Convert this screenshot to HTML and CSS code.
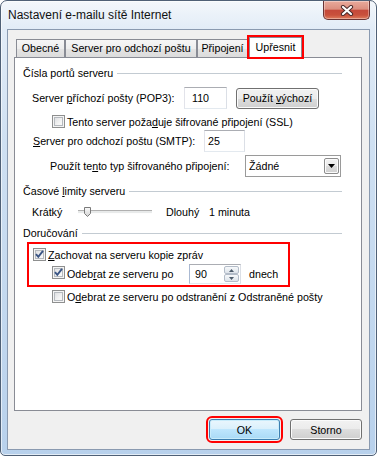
FILE: index.html
```html
<!DOCTYPE html>
<html lang="cs">
<head>
  <meta charset="UTF-8">
  <title>Nastavení e-mailu sítě Internet</title>
  <link rel="stylesheet" href="styles.css">
</head>
<body>
  <div class="window">
    <div class="titlebar">
      <span class="title">Nastavení e-mailu sítě Internet</span>
      <div class="close">
        <svg width="14" height="11" viewBox="0 0 14 11">
          <path d="M3 2 L11 9 M11 2 L3 9" stroke="#4a2a2a" stroke-width="4.2" stroke-linecap="round"/>
          <path d="M3 2 L11 9 M11 2 L3 9" stroke="#fff" stroke-width="2.2" stroke-linecap="round"/>
        </svg>
      </div>
    </div>

    <div class="client">
      <div class="tabs">
        <div class="tab tab-general">Obecné</div>
        <div class="tab tab-outgoing">Server pro odchozí poštu</div>
        <div class="tab tab-connection">Připojení</div>
        <div class="tab tab-advanced">Upřesnit</div>
      </div>

      <div class="panel">
        <div class="group-head head-ports"><span>Čísla portů serveru</span></div>

        <div class="row row-pop3">
          <span class="lbl lbl-pop3">Server <u>p</u>říchozí pošty (POP3):</span>
          <span class="field field-pop3">110</span>
          <span class="btn btn-reset"><span>Použít <u>v</u>ýchozí</span></span>
        </div>

        <div class="row row-ssl">
          <span class="check"></span>
          <span>Tento server poža<u>d</u>uje šifrované připojení (SSL)</span>
        </div>

        <div class="row row-smtp">
          <span class="lbl lbl-smtp"><u>S</u>erver pro odchozí poštu (SMTP):</span>
          <span class="field field-smtp">25</span>
        </div>

        <div class="row row-enc">
          <span class="lbl lbl-enc">Použít te<u>n</u>to typ šifrovaného připojení:</span>
          <span class="combo">
            <span class="combo-text">Žádné</span>
            <span class="combo-arrow">
              <svg width="7" height="4" viewBox="0 0 7 4"><path d="M0 0 H7 L3.5 4 Z" fill="#000"/></svg>
            </span>
          </span>
        </div>

        <div class="group-head head-timeouts"><span>Časové <u>l</u>imity serveru</span></div>

        <div class="row row-slider">
          <span class="lbl lbl-short">Krátký</span>
          <span class="slider">
            <svg class="thumb" width="7" height="10" viewBox="0 0 7 10">
              <defs>
                <linearGradient id="tg" x1="0" y1="0" x2="0" y2="1">
                  <stop offset="0" stop-color="#fafafa"/>
                  <stop offset="1" stop-color="#d2d2d2"/>
                </linearGradient>
              </defs>
              <path d="M0.5 0.5 H6.5 V6.5 L3.5 9.5 L0.5 6.5 Z" fill="url(#tg)" stroke="#7a7a7a"/>
            </svg>
          </span>
          <span class="lbl lbl-long">Dlouhý</span>
          <span>1 minuta</span>
        </div>

        <div class="group-head head-delivery"><span>Doručování</span></div>

        <div class="keep">
          <div class="row row-keep">
            <span class="check checked">
              <svg width="11" height="11" viewBox="0 0 11 11"><path d="M2 5.2 L4.3 7.8 L9 1.8" fill="none" stroke="#3a5585" stroke-width="1.9"/></svg>
            </span>
            <span><u>Z</u>achovat na serveru kopie zpráv</span>
          </div>
          <div class="row row-remove">
            <span class="check checked">
              <svg width="11" height="11" viewBox="0 0 11 11"><path d="M2 5.2 L4.3 7.8 L9 1.8" fill="none" stroke="#3a5585" stroke-width="1.9"/></svg>
            </span>
            <span class="lbl lbl-remove">Odeb<u>r</u>at ze serveru po</span>
            <span class="spin">
              <span class="spin-val">90</span>
              <span class="spin-btns">
                <span class="spin-btn"><svg width="5" height="3" viewBox="0 0 5 3"><path d="M0 3 H5 L2.5 0 Z" fill="#4c5a6a"/></svg></span>
                <span class="spin-btn"><svg width="5" height="3" viewBox="0 0 5 3"><path d="M0 0 H5 L2.5 3 Z" fill="#4c5a6a"/></svg></span>
              </span>
            </span>
            <span class="days">dnech</span>
          </div>
        </div>

        <div class="row row-after">
          <span class="check"></span>
          <span>O<u>d</u>ebrat ze serveru po odstranění z Odstraněné pošty</span>
        </div>
      </div>

      <div class="actions">
        <span class="btn btn-ok">OK</span>
        <span class="btn btn-cancel">Storno</span>
      </div>
    </div>
  </div>
</body>
</html>
```

FILE: styles.css
```css
* {
  box-sizing: border-box;
}
body {
  margin: 0;
  background: #fff;
  font-family: "Liberation Sans", Arial, sans-serif;
  font-size: 10.7px;
  color: #000;
}
u {
  text-decoration: underline;
  text-underline-offset: 1px;
}

/* window frame */
.window {
  width: 377px;
  height: 456px;
  border: 1px solid #4f6076;
  border-radius: 7px 7px 5px 5px;
  background: linear-gradient(to bottom, #f3f7fb 0, #e2ecf7 28px, #cfe0f2 140px, #b8d1ec 100%);
  box-shadow: inset 0 0 0 1px rgba(255, 255, 255, 0.6);
  padding: 0 6px 5px;
  display: flex;
  flex-direction: column;
}
.titlebar {
  height: 28px;
  display: flex;
  align-items: flex-start;
}
.title {
  font-size: 12px;
  line-height: 16px;
  margin: 6px 0 0 1px;
  color: #111;
}
.close {
  margin-left: auto;
  width: 47px;
  height: 19px;
  border: 1px solid #6a3434;
  border-top: 0;
  border-radius: 0 0 5px 5px;
  background: linear-gradient(to bottom, #e9aa9c 0, #dc8f7f 45%, #c5493a 52%, #c9513c 78%, #df7d5e 100%);
  box-shadow: inset 0 0 0 1px rgba(255, 255, 255, 0.35);
  display: flex;
  align-items: center;
  justify-content: center;
}
.client {
  flex: 1;
  border: 1px solid #8a9ab0;
  background: #f0f0f0;
  display: flex;
  flex-direction: column;
}

/* tabs */
.tabs {
  display: flex;
  align-items: flex-end;
  height: 20px;
  margin-top: 7px;
  padding-left: 8px;
}
.tab {
  height: 18px;
  border: 1px solid #898c95;
  border-bottom: 0;
  background: linear-gradient(to bottom, #f6f6f6 0, #eeeeee 50%, #e4e4e4 50%, #dcdcdc 100%);
  text-align: center;
  line-height: 17px;
}
.tab-general { width: 49px; }
.tab-outgoing { width: 132px; }
.tab-connection { width: 51px; }
.tab-advanced {
  position: relative;
  z-index: 1;
  width: 53px;
  height: 20px;
  margin-left: 1px;
  background: #fff;
  line-height: 18px;
  outline: 2px solid #f00;
}

/* page */
.panel {
  margin: 0 7px 0 6px;
  height: 354px;
  border: 1px solid #898c95;
  background: #fff;
}
.group-head {
  display: flex;
  align-items: center;
  height: 16px;
  padding-left: 8px;
  margin-right: 19px;
  white-space: nowrap;
}
.group-head::after {
  content: "";
  flex: 1;
  border-top: 1px solid #c3cbd2;
  margin-left: 4px;
}
.head-ports { margin-top: 7px; }
.head-timeouts { margin-top: 6px; }
.head-delivery { margin-top: 5px; }

.row {
  display: flex;
  align-items: center;
  white-space: nowrap;
}
.row-pop3 { margin-top: 6px; height: 22px; padding-left: 17px; }
.row-ssl { margin-top: 6px; height: 13px; padding-left: 37px; }
.row-smtp { margin-top: 2px; height: 22px; padding-left: 18px; }
.row-enc { margin-top: 3px; height: 22px; padding-left: 35px; }
.row-slider { margin-top: 5px; height: 16px; padding-left: 17px; }
.row-after { margin-top: 3px; height: 13px; padding-left: 37px; }

.lbl-pop3 { width: 152px; }
.lbl-smtp { width: 171px; }
.lbl-enc { width: 195px; }
.lbl-short { width: 46px; }
.lbl-long { width: 43px; margin-left: 14px; }
.lbl-remove { width: 122px; }

/* controls */
.field {
  height: 22px;
  border: 1px solid;
  border-color: #abadb3 #dbdfe6 #e3e9ef #e2e3ea;
  background: #fff;
  display: flex;
  align-items: center;
}
.field-pop3 { width: 43px; padding-left: 7px; }
.field-smtp { width: 41px; padding-left: 3px; }

.btn {
  height: 21px;
  border: 1px solid #707070;
  border-radius: 3px;
  background: linear-gradient(to bottom, #f2f2f2 0, #ebebeb 50%, #dddddd 50%, #cfcfcf 100%);
  box-shadow: inset 0 0 0 1px #fbfbfb;
  display: flex;
  align-items: center;
  justify-content: center;
  white-space: nowrap;
}
.btn-reset { width: 83px; margin-left: 9px; }

.combo {
  width: 96px;
  height: 22px;
  border: 1px solid #9a9a9a;
  background: #fff;
  display: flex;
  align-items: center;
  padding: 0 1px 0 3px;
}
.combo-text { flex: 1; }
.combo-arrow {
  width: 15px;
  height: 16px;
  border: 1px solid #8c8c8c;
  border-radius: 2px;
  background: linear-gradient(to bottom, #f2f2f2 0, #ebebeb 50%, #dddddd 50%, #cfcfcf 100%);
  box-shadow: inset 0 0 0 1px #fbfbfb;
  display: flex;
  align-items: center;
  justify-content: center;
}

.check {
  width: 13px;
  height: 13px;
  flex: none;
  margin-right: 2px;
  border: 1px solid #8e8f8f;
  background: linear-gradient(135deg, #d6d8db 0, #f4f4f4 60%, #fdfdfd 100%);
  box-shadow: inset 0 0 0 1px #f4f4f4, inset 0 0 0 2px #b5b9be;
  display: flex;
  align-items: center;
  justify-content: center;
}

.slider {
  width: 74px;
  height: 16px;
  display: flex;
  align-items: center;
  background: linear-gradient(to bottom, transparent 6px, #b0b0b0 6px, #b0b0b0 7px, #e8eaea 7px, #e8eaea 9px, #fdfdfd 9px, #fdfdfd 10px, transparent 10px);
}
.thumb {
  margin-left: 6px;
}

/* delivery highlight */
.keep {
  margin: 1px 0 0 12px;
  width: 263px;
  height: 45px;
  border: 2px solid #f00;
}
.row-keep { margin-top: 4px; height: 13px; padding-left: 4px; }
.row-remove { margin-top: 3px; height: 20px; padding-left: 23px; }
.row-remove .check {
  align-self: flex-start;
  margin-top: 2px;
}
.spin {
  width: 52px;
  height: 20px;
  border: 1px solid;
  border-color: #abadb3 #dbdfe6 #e3e9ef #aab9d2;
  background: #fff;
  display: flex;
}
.spin-val {
  flex: 1;
  padding-left: 5px;
  display: flex;
  align-items: center;
}
.spin-btns {
  width: 16px;
  padding: 1px 1px 1px 0;
  display: flex;
  flex-direction: column;
}
.spin-btn {
  flex: 1;
  border: 1px solid #b3bcc8;
  border-radius: 2px;
  background: linear-gradient(to bottom, #f7f9fb, #dde3ea);
  display: flex;
  align-items: center;
  justify-content: center;
}
.days { margin-left: 8px; }

/* dialog buttons */
.actions {
  display: flex;
  justify-content: flex-end;
  gap: 10px;
  padding: 8px 7px 0 0;
}
.btn-ok {
  width: 71px;
  border-color: #3c7fb1;
  background: linear-gradient(to bottom, #eaf6fd 0, #d9f0fc 50%, #bee6fd 50%, #a9daf6 100%);
  box-shadow: inset 0 0 0 1px #c8ecfb;
  outline: 2px solid #f00;
  outline-offset: 1px;
}
.btn-cancel { width: 72px; }
```
